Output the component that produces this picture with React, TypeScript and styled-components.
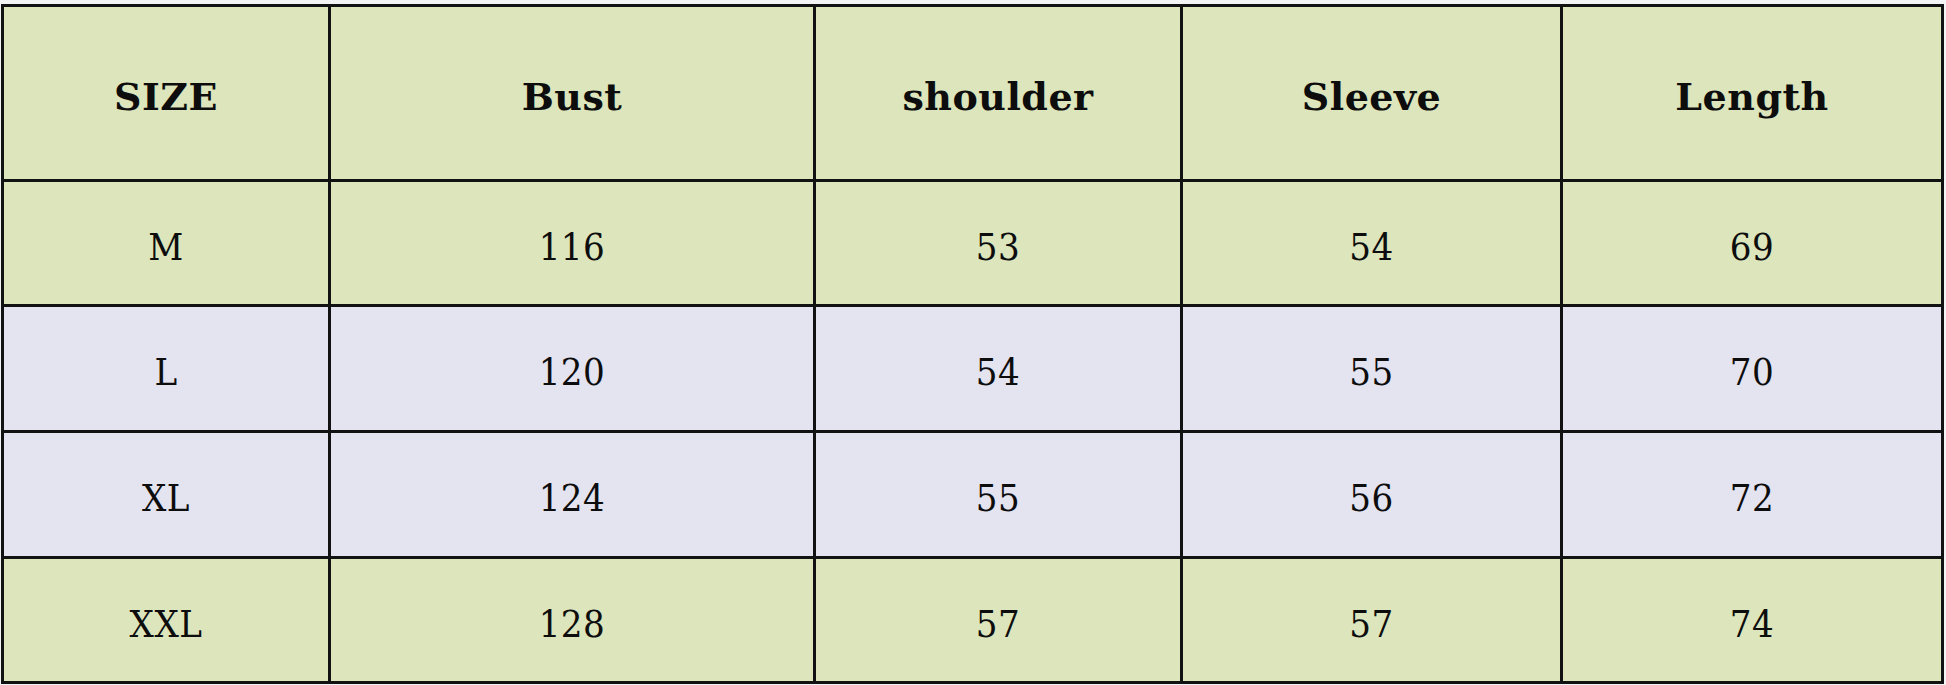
import React from "react";
import styled, { createGlobalStyle } from "styled-components";

const Global = createGlobalStyle`
  html, body { margin: 0; padding: 0; background: #f2f3f4; }
  #root { width: 1946px; height: 685px; overflow: hidden; }
`;

const Grid = styled.div`
  display: grid;
  grid-template-columns: 324px 482px 364px 377px 378px;
  grid-template-rows: 172px 122px 123px 123px 122px;
  gap: 3px;
  padding: 3px;
  margin: 4px 0 0 1px;
  width: max-content;
  background: #121212;
`;

const Cell = styled.div<{ $tone: "green" | "lilac" }>`
  display: flex;
  align-items: center;
  justify-content: center;
  padding-top: 7px;
  box-sizing: border-box;
  background: ${(p) => (p.$tone === "green" ? "#dce5bb" : "#e4e3f0")};
  color: #0d0d0d;
`;

const HeadText = styled.span`
  font-family: "DejaVu Serif", "Liberation Serif", serif;
  font-weight: 700;
  font-size: 38px;
  letter-spacing: 0.5px;
  line-height: 1;
`;

const ValueText = styled.span`
  font-family: "DejaVu Serif Condensed", "DejaVu Serif", serif;
  font-stretch: condensed;
  font-weight: 400;
  font-size: 38px;
  letter-spacing: 0.5px;
  line-height: 1;
`;

const headers = ["SIZE", "Bust", "shoulder", "Sleeve", "Length"];
const rows: { values: string[]; tone: "green" | "lilac" }[] = [
  { values: ["M", "116", "53", "54", "69"], tone: "green" },
  { values: ["L", "120", "54", "55", "70"], tone: "lilac" },
  { values: ["XL", "124", "55", "56", "72"], tone: "lilac" },
  { values: ["XXL", "128", "57", "57", "74"], tone: "green" },
];

export default function App() {
  return (
    <>
      <Global />
      <Grid>
        {headers.map((h) => (
          <Cell key={h} $tone="green">
            <HeadText>{h}</HeadText>
          </Cell>
        ))}
        {rows.map((r) =>
          r.values.map((v, i) => (
            <Cell key={r.values[0] + i} $tone={r.tone}>
              <ValueText>{v}</ValueText>
            </Cell>
          ))
        )}
      </Grid>
    </>
  );
}
